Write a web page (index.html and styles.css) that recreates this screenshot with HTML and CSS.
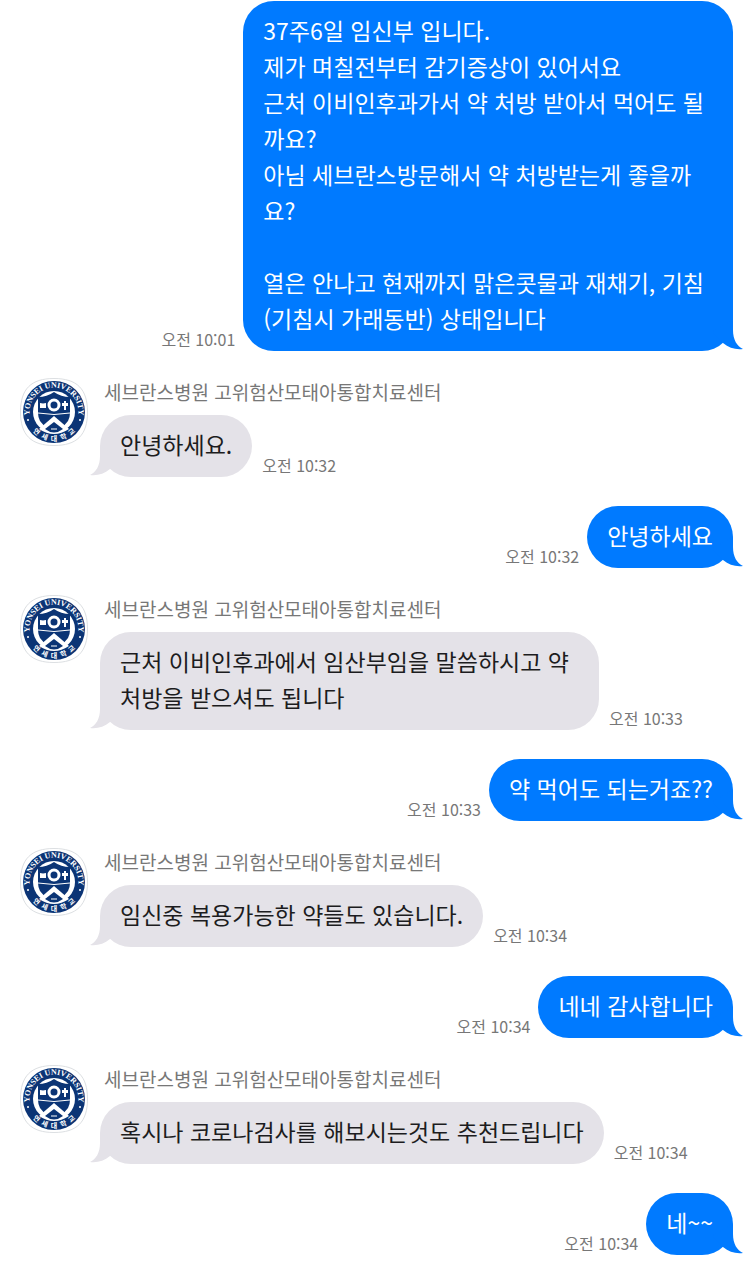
FILE: index.html
```
<!DOCTYPE html>
<html lang="ko">

<head>
    <meta charset="UTF-8">
    <meta name="viewport" content="width=device-width, initial-scale=1.0">
    <title>세브란스병원 고위험산모태아통합치료센터</title>
    <link rel="stylesheet" href="styles.css">
</head>

<body>
    <!-- shared shapes -->
    <svg class="shapes" width="0" height="0" aria-hidden="true">
        <symbol id="tail" viewBox="0 0 41 31">
            <path fill="currentColor" d="M31 0V10C31 20 35 26 41 29C34 30 27 28 21 23L10 12Z" />
        </symbol>
        <symbol id="logo" viewBox="0 0 68 68">
            <path d="M34 .5C57 .5 67.500 11 67.500 34S57 67.500 34 67.500S.5 57 .5 34S11 .5 34 .5Z" fill="#fff" stroke="#dcdfe2" />
            <circle cx="34" cy="34" r="31" fill="#0b3475" />
            <circle cx="34" cy="34" r="21" fill="#fff" />
            <path id="arcTop" d="M11.600 44A24.500 24.500 0 1 1 56.400 44" fill="none" />
            <path id="arcBottom" d="M6.800 44A29 29 0 0 0 61.200 44" fill="none" />
            <text class="logo_en">
                <textPath href="#arcTop" startOffset="50%" text-anchor="middle">YONSEI UNIVERSITY</textPath>
            </text>
            <text class="logo_ko">
                <textPath href="#arcBottom" startOffset="50%" text-anchor="middle">연&#160;&#160;세&#160;&#160;대&#160;&#160;학&#160;&#160;교</textPath>
            </text>
            <circle cx="8" cy="42" r="1" fill="#fff" />
            <circle cx="60" cy="42" r="1" fill="#fff" />
            <path d="M18 19Q27 19 34 14Q41 19 50 19V35Q50 39 48 43L42 50L34 54L26 50L20 43Q18 39 18 35Z" fill="#0b3475" />
            <path d="M18 35Q34 38 50 35" fill="none" stroke="#fff" stroke-width="1" />
            <path d="M34 38L49 51Q34 61 19 51Z" fill="#fff" />
            <path d="M34 44L43 51Q34 58 25 51Z" fill="#0b3475" />
            <path d="M31 51H37" stroke="#fff" stroke-width="1" />
            <circle cx="34" cy="27" r="5" fill="#0b3475" stroke="#fff" stroke-width="3" />
            <path d="M20 25L23 25.500L26 25V30H20ZM44 23H46V32H44ZM42 25H48V28H42Z" fill="#fff" />
        </symbol>
    </svg>

    <main class="chat">
        <div class="message sent">
            <time class="time">오전 10:01</time>
            <div class="bubble long">
                37주6일 임신부 입니다.<br>
                제가 며칠전부터 감기증상이 있어서요<br>
                근처 이비인후과가서 약 처방 받아서 먹어도 될<br>
                까요?<br>
                아님 세브란스방문해서 약 처방받는게 좋을까<br>
                요?<br>
                <br>
                열은 안나고 현재까지 맑은콧물과 재채기, 기침<br>
                (기침시 가래동반) 상태입니다
                <svg class="tail"><use href="#tail" /></svg>
            </div>
        </div>

        <div class="message received">
            <svg class="avatar" role="img" aria-label="연세대학교"><use href="#logo" /></svg>
            <div class="content">
                <div class="name">세브란스병원 고위험산모태아통합치료센터</div>
                <div class="row">
                    <div class="bubble">안녕하세요.<svg class="tail"><use href="#tail" /></svg></div>
                    <time class="time">오전 10:32</time>
                </div>
            </div>
        </div>

        <div class="message sent">
            <time class="time">오전 10:32</time>
            <div class="bubble">안녕하세요<svg class="tail"><use href="#tail" /></svg></div>
        </div>

        <div class="message received">
            <svg class="avatar" role="img" aria-label="연세대학교"><use href="#logo" /></svg>
            <div class="content">
                <div class="name">세브란스병원 고위험산모태아통합치료센터</div>
                <div class="row">
                    <div class="bubble long">
                        근처 이비인후과에서 임산부임을 말씀하시고 약<br>
                        처방을 받으셔도 됩니다
                        <svg class="tail"><use href="#tail" /></svg>
                    </div>
                    <time class="time">오전 10:33</time>
                </div>
            </div>
        </div>

        <div class="message sent">
            <time class="time">오전 10:33</time>
            <div class="bubble">약 먹어도 되는거죠??<svg class="tail"><use href="#tail" /></svg></div>
        </div>

        <div class="message received">
            <svg class="avatar" role="img" aria-label="연세대학교"><use href="#logo" /></svg>
            <div class="content">
                <div class="name">세브란스병원 고위험산모태아통합치료센터</div>
                <div class="row">
                    <div class="bubble">임신중 복용가능한 약들도 있습니다.<svg class="tail"><use href="#tail" /></svg></div>
                    <time class="time">오전 10:34</time>
                </div>
            </div>
        </div>

        <div class="message sent">
            <time class="time">오전 10:34</time>
            <div class="bubble">네네 감사합니다<svg class="tail"><use href="#tail" /></svg></div>
        </div>

        <div class="message received">
            <svg class="avatar" role="img" aria-label="연세대학교"><use href="#logo" /></svg>
            <div class="content">
                <div class="name">세브란스병원 고위험산모태아통합치료센터</div>
                <div class="row">
                    <div class="bubble">혹시나 코로나검사를 해보시는것도 추천드립니다<svg class="tail"><use href="#tail" /></svg></div>
                    <time class="time">오전 10:34</time>
                </div>
            </div>
        </div>

        <div class="message sent">
            <time class="time">오전 10:34</time>
            <div class="bubble">네~~<svg class="tail"><use href="#tail" /></svg></div>
        </div>
    </main>
</body>

</html>
```
FILE: styles.css
```
* {
    box-sizing: border-box;
}

body {
    margin: 0;
    background: #fff;
    color: #1c1c20;
    font-family: "Noto Sans CJK KR", sans-serif;
}

.shapes {
    position: absolute;
}

.chat {
    padding: 1px 17px 21px 20px;
}

.message {
    display: flex;
}

.sent {
    justify-content: flex-end;
    align-items: flex-end;
    gap: 8px;
}

.received {
    gap: 12px;
    margin: 27px 0 29px;
}

.avatar {
    width: 68px;
    height: 68px;
    flex-shrink: 0;
}

.name {
    margin: 0 0 9px 4px;
    font-size: 19px;
    line-height: 28px;
    color: #777;
}

.row {
    display: flex;
    align-items: flex-end;
    gap: 10px;
}

.bubble {
    position: relative;
    padding: 11px 20px 15px;
    border-radius: 31px;
    font-size: 23px;
    line-height: 36px;
    word-break: keep-all;
}

.sent .bubble {
    background: #007aff;
    color: #fff;
}

.received .bubble {
    background: #e4e2e8;
}

.sent .long {
    padding-right: 29px;
}

.received .long {
    padding-right: 30px;
}

/* little hook on the bottom corner of each bubble */
.tail {
    position: absolute;
    right: -10px;
    bottom: 0;
    width: 41px;
    height: 31px;
    color: #007aff;
}

.received .tail {
    right: auto;
    left: -10px;
    color: #e4e2e8;
    transform: scaleX(-1);
}

.time {
    flex-shrink: 0;
    font-size: 16px;
    line-height: 24px;
    color: #777;
}

.logo_en,
.logo_ko {
    fill: #fff;
    font-weight: 700;
}

.logo_en {
    font-family: "Liberation Serif", serif;
    font-size: 8px;
}

.logo_ko {
    font-size: 7px;
}
```
